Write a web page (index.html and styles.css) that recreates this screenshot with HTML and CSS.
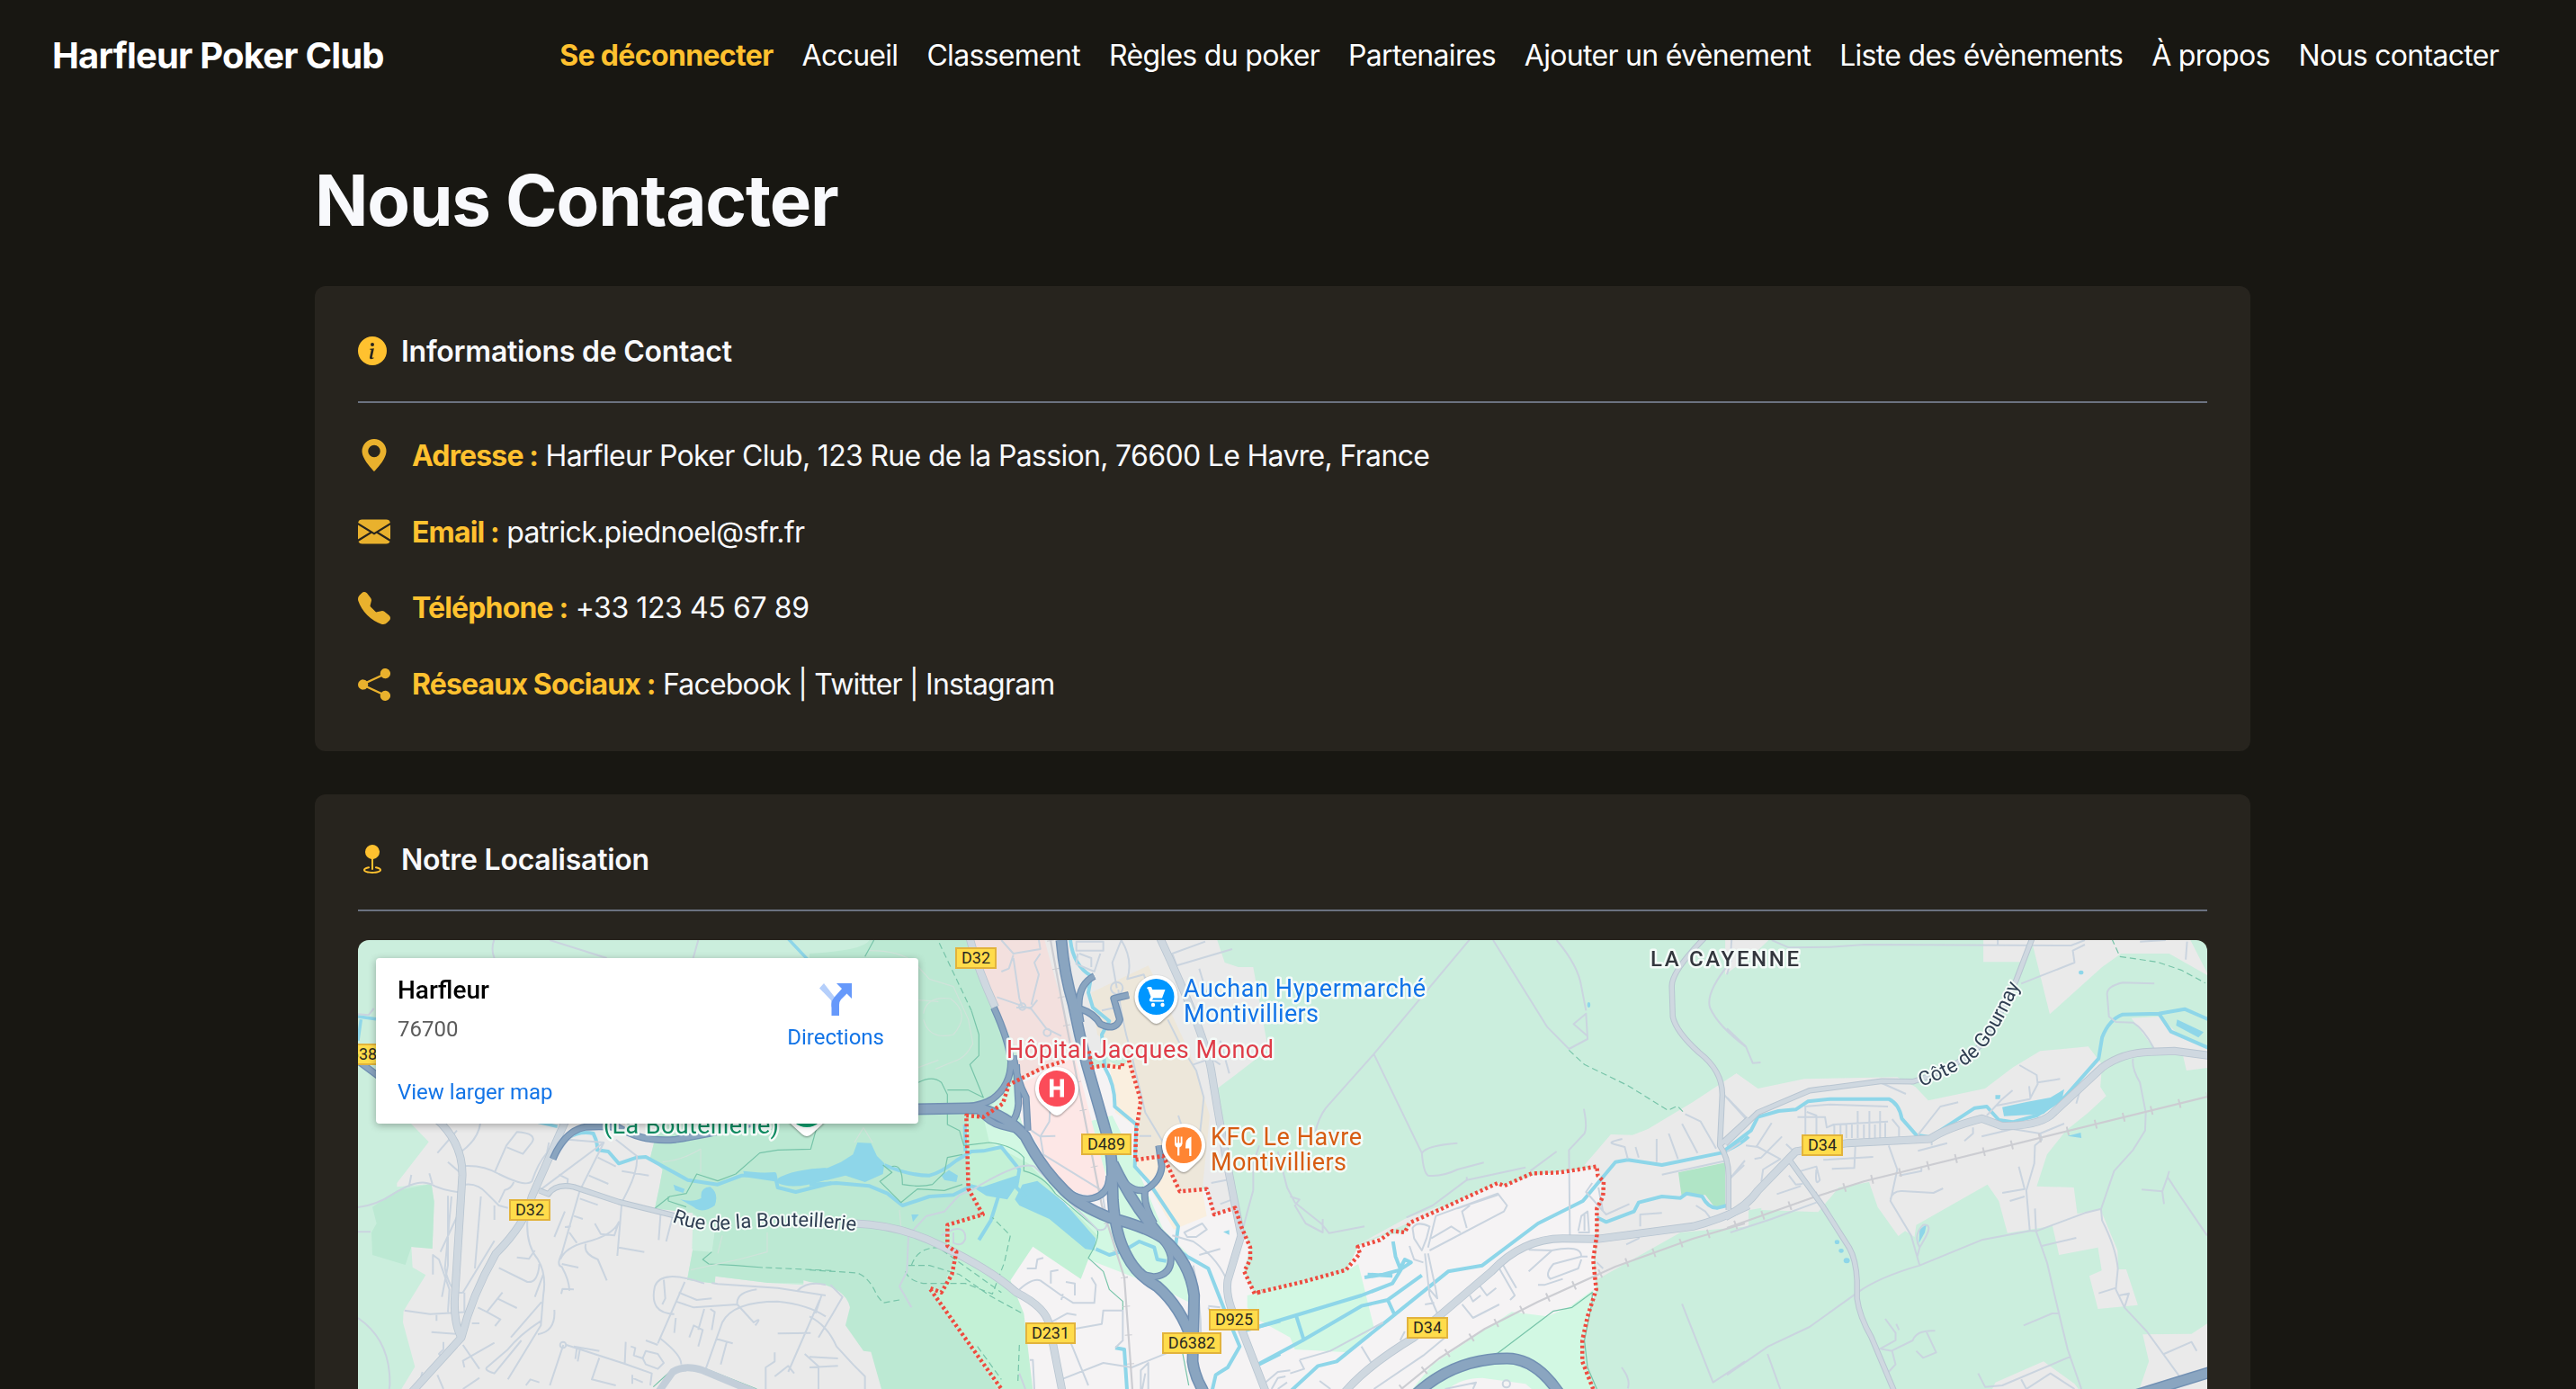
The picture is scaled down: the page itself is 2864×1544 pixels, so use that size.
FILE: index.html
```html
<!DOCTYPE html>
<html lang="fr">
<head>
<meta charset="utf-8">
<title>Nous Contacter - Harfleur Poker Club</title>
<link rel="stylesheet" href="styles.css">
</head>
<body>
<header class="navbar">
  <a class="brand">Harfleur Poker Club</a>
  <nav class="nav">
    <a class="logout">Se déconnecter</a>
    <a>Accueil</a>
    <a>Classement</a>
    <a>Règles du poker</a>
    <a>Partenaires</a>
    <a>Ajouter un évènement</a>
    <a>Liste des évènements</a>
    <a>À propos</a>
    <a>Nous contacter</a>
  </nav>
</header>
<main class="page">
  <h1>Nous Contacter</h1>
  <section class="card">
    <h2><svg class="icon" viewBox="0 0 16 16"><path d="M8 16A8 8 0 1 0 8 0a8 8 0 0 0 0 16m.93-9.412-1 4.705c-.07.34.029.533.304.533.194 0 .487-.07.686-.246l-.088.416c-.287.346-.92.598-1.465.598-.703 0-1.002-.422-.808-1.319l.738-3.468c.064-.293.006-.399-.287-.47l-.451-.081.082-.381 2.29-.287zM8 5.5a1 1 0 1 1 0-2 1 1 0 0 1 0 2"/></svg><span>Informations de Contact</span></h2>
    <ul class="contacts">
      <li><svg class="icon" viewBox="0 0 16 16"><path d="M8 16s6-5.686 6-10A6 6 0 0 0 2 6c0 4.314 6 10 6 10m0-7a3 3 0 1 1 0-6 3 3 0 0 1 0 6"/></svg><p><strong>Adresse :</strong> <span>Harfleur Poker Club, 123 Rue de la Passion, 76600 Le Havre, France</span></p></li>
      <li><svg class="icon" viewBox="0 0 16 16"><path d="M.05 3.555A2 2 0 0 1 2 2h12a2 2 0 0 1 1.95 1.555L8 8.414zM0 4.697v7.104l5.803-3.558zM6.761 8.83l-6.57 4.027A2 2 0 0 0 2 14h12a2 2 0 0 0 1.808-1.144l-6.57-4.027L8 9.586zm3.436-.586L16 11.801V4.697z"/></svg><p><strong>Email :</strong> <span>patrick.piednoel@sfr.fr</span></p></li>
      <li><svg class="icon" viewBox="0 0 16 16"><path fill-rule="evenodd" d="M1.885.511a1.745 1.745 0 0 1 2.61.163L6.29 2.98c.329.423.445.974.315 1.494l-.547 2.19a.68.68 0 0 0 .178.643l2.457 2.457a.68.68 0 0 0 .644.178l2.189-.547a1.75 1.75 0 0 1 1.494.315l2.306 1.794c.829.645.905 1.87.163 2.611l-1.034 1.034c-.74.74-1.846 1.065-2.877.702a18.6 18.6 0 0 1-7.01-4.42 18.6 18.6 0 0 1-4.42-7.009c-.362-1.03-.037-2.137.703-2.877z"/></svg><p><strong>Téléphone :</strong> <span class="digits">+33 123 45 67 89</span></p></li>
      <li><svg class="icon" viewBox="0 0 16 16"><path d="M11 2.5a2.5 2.5 0 1 1 .603 1.628l-6.718 3.12a2.5 2.5 0 0 1 0 1.504l6.718 3.12a2.5 2.5 0 1 1-.488.876l-6.718-3.12a2.5 2.5 0 1 1 0-3.256l6.718-3.12A2.5 2.5 0 0 1 11 2.5"/></svg><p><strong>Réseaux Sociaux :</strong> <span class="links">Facebook | Twitter | Instagram</span></p></li>
    </ul>
  </section>
  <section class="card">
    <h2><svg class="icon" viewBox="0 0 16 16"><path fill-rule="evenodd" d="M4 4a4 4 0 1 1 4.5 3.969V13.5a.5.5 0 0 1-1 0V7.97A4 4 0 0 1 4 3.999zm2.493 8.574a.5.5 0 0 1-.411.575c-.712.118-1.28.295-1.655.493a1.3 1.3 0 0 0-.37.265.3.3 0 0 0-.057.09V14l.002.008.016.033a.6.6 0 0 0 .145.15c.165.13.435.27.813.395.751.25 1.82.414 3.024.414s2.273-.163 3.024-.414c.378-.126.648-.265.813-.395a.6.6 0 0 0 .146-.15l.015-.033L12 14v-.004a.3.3 0 0 0-.057-.09 1.3 1.3 0 0 0-.37-.264c-.376-.198-.943-.375-1.655-.493a.5.5 0 1 1 .164-.986c.77.127 1.452.328 1.957.594C12.5 13 13 13.4 13 14c0 .426-.26.752-.544.977-.29.228-.68.413-1.116.558-.878.293-2.059.465-3.34.465s-2.462-.172-3.34-.465c-.436-.145-.826-.33-1.116-.558C3.26 14.752 3 14.426 3 14c0-.599.5-1 .961-1.243.505-.266 1.187-.467 1.957-.594a.5.5 0 0 1 .575.411"/></svg><span>Notre Localisation</span></h2>
    <div class="map">
      <svg class="tiles" viewBox="398 1045 2056 499">
        <defs>
          <path id="hw-main" d="M840 15Q850 130 880 230Q900 330 925 430L985 640Q1010 720 1010 800L1012 880Q1020 1000 1060 1070Q1090 1130 1160 1170Q1240 1240 1275 1350M300 580L560 575Q660 600 720 670Q770 770 850 850Q900 900 1000 940Q1120 970 1180 1010Q1270 1090 1283 1200L1278 1420Q1285 1470 1310 1512L1330 1560M1012 760Q1080 900 1160 990L1200 1030"/>
          <path id="hw-ramp" d="M615 240Q665 350 672 420Q672 500 610 545Q580 565 520 572M680 400Q690 480 722 540L728 650M690 430L697 560Q695 600 670 630M560 580Q600 625 640 635L700 650M1000 800Q1000 870 930 878Q900 880 860 855M1025 790Q1070 860 1120 848Q1170 820 1175 770L1165 700M1120 848Q1110 890 1150 960M1120 975Q1190 1010 1205 1070Q1210 1130 1150 1138L1110 1130M905 290Q880 170 950 135M905 245Q950 260 970 295Q1020 320 1035 280L1015 210L1065 198"/>
          <path id="hw-west" d="M650 745Q690 650 760 638Q820 635 870 640Q950 690 1060 680Q1250 650 1400 600M-10 410L70 470"/>
          <path id="hw-south" d="M490 1545Q620 1410 800 1410Q900 1410 980 1545"/>
          <path id="hw-east" d="M1180 1535L1420 1450"/>
          <path id="rd-west" d="M150 1555L345 1340Q380 1200 460 1060Q560 960 580 870L700 600M260 610Q350 690 348 800L322 1220Q322 1300 345 1340"/>
          <path id="rd-west2" d="M605 850L635 862Q660 825 720 838L870 888L1060 935"/>
          <path id="rd-mid" d="M150 960Q300 965 430 1030Q600 1110 690 1190Q790 1240 800 1300L845 1530M535 10Q560 110 620 240M1170 10Q1320 330 1340 450Q1380 700 1420 900L1440 1000L1395 1150Q1385 1220 1440 1310L1525 1530"/>
          <path id="rd-d34" d="M270 1530Q340 1440 500 1340L750 1120Q850 1010 980 1010L1090 1012L1400 970Q1480 950 1580 900"/>
          <path id="rd-cayenne" d="M1440 5Q1330 120 1332 170L1335 270Q1345 320 1420 390Q1495 450 1495 530L1487 700Q1515 740 1515 800V915M1485 700L1580 610"/>
          <path id="rd-east" d="M-5 938Q60 900 90 850L200 720L350 692L590 678Q640 640 740 610L800 635Q900 635 940 600L1090 440Q1150 390 1230 388L1300 385L1400 400"/>
          <path id="rd-gournay" d="M-5 695L90 590L240 517L450 485L540 487Q680 440 760 340L840 150L890 0M180 745L280 905L355 1040Q375 1080 378 1150L378 1210Q385 1270 420 1340L490 1530"/>
        </defs>

        <rect class="field" x="398" y="1045" width="2056" height="499"/>

        <!-- Land use -->
        <g transform="translate(398 1040) scale(.33333)">
          <path class="urban" d="M160 610L236 688L130 825V838L245 828L254 888L248 1044L178 1038L182 1106L226 1132L152 1252L150 1290L190 1438L140 1520V1560H1570V1170L1368 1158L1192 1136L1190 1160L1098 1148L1116 1050V925L990 910L1005 840L1016 780L975 740L990 680V600Z"/>
          <path class="park" d="M48 905L130 850L245 828L254 888L248 1044L178 1038L158 1098L48 1065L45 990L62 960ZM990 680V600H1580V1160L1368 1158L1192 1136L1190 1160L1098 1148L1116 1050L1180 1055L1190 980L1116 925L990 910L1005 840L1016 780L975 740Z"/>
          <path class="field" d="M1116 985L1190 985L1180 1055L1114 1045Z"/>
        </g>
        <g transform="translate(900 1040) scale(.33333)">
          <path class="park" d="M215 0H540L620 240L680 420L690 500L560 600L540 850L590 930L470 965V1035L490 1060L440 1190L400 1175L640 1530H0V60Q180 50 200 15Z"/>
          <path class="urban" d="M0 1155Q120 1170 135 1240L120 1300L180 1385L205 1388L245 1530H-20V1150ZM780 0H1355L1385 90L1430 105L1480 105L1530 380L1420 465L1360 510L1395 780L1420 908L1350 930L1325 845L1180 735L1060 400L840 415Z"/>
          <path class="hospital" d="M540 0H780L890 400L700 480L690 380L620 240Z"/>
          <path class="mall" d="M940 190L1130 100L1170 180L1240 330L1280 420L1335 600L1310 850L1235 853L1180 735L1088 745L1105 550L1065 415L960 330Z"/>
          <path class="town" d="M525 600L580 605L660 500L850 415L935 400L940 440L1040 440L1065 415L1105 550L1088 745L1180 735L1235 853L1325 845L1350 930L1420 908L1470 1040L1450 1120L1485 1195L1570 1170V1540H650L400 1175L440 1190L490 1060L460 1035V965L580 930L530 850Z"/>
          <path class="town-park" d="M525 600L580 605L660 500L690 560L740 740L850 900L1000 960L1030 1060L930 1080L905 1145L745 1037L670 1150L715 1260L748 1540H650L400 1175L440 1190L490 1060L460 1035V965L580 930L530 850Z"/>
          <path class="town-green" d="M660 500L695 490V600L740 680L730 760L600 690L580 605ZM730 720L850 860L1000 950L990 800L930 620L1010 600L1060 700L1180 980L1260 1060L1270 1225L1160 1170L930 1080L960 1000L730 760ZM1460 1200L1570 1175V1300L1500 1290L1460 1240Z"/>
          <path class="town-hospital" d="M690 500L850 425L885 400L985 790Q990 870 930 865Q860 860 800 770L735 650Z"/>
          <path class="town-mall" d="M1000 420L1040 440L1065 415L1105 550L1088 745L1180 735L1235 853L1310 845L1325 935L1215 980L1140 850L1090 760L1080 630L1020 590Z"/>
        </g>
        <g transform="translate(1400 1040) scale(.34439 .33333)">
          <path class="town" d="M-5 1190L280 1120L320 1035L400 1000L470 990L490 955L770 825L790 835L880 800L1090 770L1110 830L1090 920L1080 1100L1088 1180L1045 1340V1430L1090 1540H-5Z"/>
          <path class="town-green" d="M-5 1190L280 1120L320 1095L370 1305L290 1390L115 1380L100 1340L-5 1280ZM480 1530L560 1430L815 1255L930 1270L1000 1240L1080 1180L1045 1340V1430L1090 1540Z"/>
          <path class="town" d="M590 1530Q640 1475 720 1475L860 1495L900 1530Z"/>
          <path class="urban" d="M1090 770L1050 765L1135 663L1205 665L1255 645L1400 555L1540 460L1580 490V970L1360 990L1085 1150L1092 920L1112 830ZM320 1030L470 945L600 895L490 955ZM1420 0H1580V60L1530 20Z"/>
          <path class="grove" d="M1353 790L1505 757L1512 905L1470 905L1440 865L1363 865Z"/>
        </g>
        <g transform="translate(1920 1040) scale(.38265 .33333)">
          <path class="urban" d="M-5 485L28 460L90 510L225 478L495 472L548 505L585 550L750 510L830 440L910 385L1050 370L1090 430L1085 505L1102 535L1050 590L985 650L930 730L900 836L1008 840L1018 928L1085 912L1135 1050L1137 1113L1160 1113L1194 1232L1078 1245L1053 1135L1089 1117L1078 1040L965 1065L946 968L815 992L790 885L757 830L550 965L545 1005L518 985L498 1002L438 905L413 822L325 840L265 922L100 915V908L-5 930ZM-5 0H135L80 60L-5 130ZM745 0V88H855L885 15L938 262L1090 105L1145 60H1285L1400 135L1340 0ZM1175 275L1260 270L1320 340L1400 375V440L1335 450L1325 400L1240 375ZM1208 1330L1350 1328L1400 1290V1540H1190L1226 1420ZM780 1490L920 1420L1010 1495L1040 1540H760Z"/>
        </g>

        <!-- Water -->
        <g class="water" transform="translate(398 1040) scale(.33333)">
          <path class="w3" d="M1425 0L1500 80M0 270L60 278M10 280L0 350M590 620L665 637"/>
          <path class="w4" d="M700 675Q740 650 785 660Q800 690 798 715L835 720L870 760L930 740L960 738L1100 815L1200 830L1280 800L1390 795L1400 840L1460 855L1580 825"/>
          <path class="lake" d="M1075 880Q1120 890 1145 875Q1140 840 1175 838Q1205 860 1190 900Q1150 930 1120 905ZM1285 785L1390 795V820L1290 805ZM1400 810Q1450 780 1560 775V815Q1450 850 1400 825ZM1052 830L1090 845L1085 858L1058 850Z"/>
        </g>
        <g class="water" transform="translate(900 1040) scale(.33333)">
          <path class="lake" d="M0 780L60 775L105 755L145 730L160 690L205 692L225 735L250 760L245 795L185 822L120 800L60 815L0 820ZM440 800L465 782L495 800L490 822L450 815ZM555 845L690 800L700 820L660 880L590 868ZM685 880L710 830L760 818L850 890L955 1010L950 1050L920 1045L800 945L700 900ZM340 930L365 930L345 955Z"/>
          <path class="w4" d="M250 765Q330 800 400 800Q440 790 490 750L540 720L580 718L640 705L700 780L690 840L720 870M630 870L605 950L565 1015M0 830L90 825L200 835L260 860L310 900L400 870L480 865L540 835L600 850M870 15Q880 100 940 135L930 190L945 240L1000 285L975 330L985 440Q1020 500 1018 570L1090 630L1085 770L1130 820L1230 970L1220 1040M955 1045L1000 1065L1050 1050L1100 1020L1150 1040L1160 1080L1190 1085M1230 1050L1260 1070L1330 1110L1385 1250L1435 1370L1395 1440L1355 1465L1340 1530M1440 1320L1570 1285M1490 1435L1570 1395M1020 1375L1050 1380L1060 1530M518 630L520 720"/>
          <path class="lake" d="M1380 988L1400 982V998Z"/>
        </g>
        <g class="water" transform="translate(1400 1040) scale(.34439 .33333)">
          <path class="w4" d="M-5 1305L330 1200L430 1160L460 1110L490 1090L470 1080L455 1110L440 1070L432 1020M455 1115L400 1130L340 1140M350 1130L430 1135M-5 1430L140 1350L330 1235L415 1215L525 1133M415 1215L435 1260M120 1270L143 1345M90 1530L190 1435L250 1420L430 1270L610 1120L720 1100L900 960L1045 885L1150 755L1190 748L1300 765L1490 725Q1550 700 1580 670M1090 940L1120 955L1210 920L1225 890L1300 870L1360 875L1380 860L1430 870Q1450 910 1480 908L1510 900"/>
          <ellipse class="lake" cx="1064" cy="231" rx="5" ry="9"/>
        </g>
        <g class="water" transform="translate(1920 1040) scale(.38265 .33333)">
          <path class="w4" d="M-5 715L70 650L90 605L150 585L200 580L235 553L300 545L470 545Q500 560 508 610L550 665L590 672L640 635L720 575L755 570L790 615L830 622L900 600L980 540L1080 410L1090 340Q1110 280 1150 263L1255 260L1330 245L1400 280M1255 260L1290 320L1400 375"/>
          <path class="lake" d="M800 572L870 555L940 540L980 512L975 540L920 595L805 602ZM1308 280L1385 322L1370 340L1305 300ZM990 668L1028 657L1030 675ZM780 532L795 532L793 545L780 545ZM558 1025L560 980L580 962L575 990Z"/>
          <circle class="lake" cx="1029" cy="123" r="7"/><circle class="lake" cx="320" cy="1022" r="7"/><circle class="lake" cx="332" cy="1051" r="7"/><circle class="lake" cx="348" cy="1084" r="9"/>
        </g>

        <!-- Trails -->
        <g transform="translate(398 1040) scale(.33333)">
          <path class="trail" d="M990 910L1040 870L1095 860L1130 795L1200 818L1260 795L1340 725L1400 715L1510 712L1530 640M1095 905L1035 885V870M1180 1055L1150 1080L1170 1095L1260 1100L1350 1107M985 1505L1040 1455M1160 1445L1330 1512"/>
          <path class="trail dashed" d="M1360 1107L1580 1117"/>
        </g>
        <g transform="translate(900 1040) scale(.33333)">
          <path class="trail" d="M363 490Q410 465 440 490L460 530V630L500 650L515 700L600 690Q680 700 715 740V785Q780 800 820 860L960 980Q970 1010 930 1075L980 1120L1000 1180L1045 1220V1250M460 515L530 515L580 540L535 430L565 400V330L540 250M245 765L275 790L235 820L305 890L360 845L450 850L510 830M275 770Q310 760 310 830Q370 840 410 830L450 790L460 740L510 730M215 15L185 70M1245 1395L1265 1500"/>
          <path class="trail dashed" d="M433 25L540 250M0 1115L160 1125Q200 1140 225 1200L245 1225L300 1215M330 1100L400 1100L500 1130L600 1200L710 1260M340 1100Q360 1040 430 1040L640 1190M320 1120Q330 1150 380 1160L520 1160L610 1195L650 1090L670 1000L610 940M700 1365L695 1490M560 1370L640 1480"/>
        </g>
        <g transform="translate(1400 1040) scale(.34439 .33333)">
          <path class="trail" d="M760 1400L950 1252L1010 1240L1075 1190V1220L1050 1350L1060 1440L1090 1512"/>
          <path class="trail dashed" d="M1000 382L1050 430L1190 500L1320 583L1350 568L1375 595"/>
        </g>
        <g transform="translate(1920 1040) scale(.38265 .33333)">
          <path class="trail dashed" d="M1118 10L1142 70L1250 88L1320 115L1390 158"/>
        </g>

        <!-- Local streets -->
        <g class="street" transform="translate(398 1040) scale(.33333)">
          <path d="M460 0Q440 40 455 75M640 15L830 75M1135 15L1118 75M0 262L35 265L53 243M0 906Q60 900 120 860Q200 810 240 828Q280 850 340 856M170 838L178 798M238 793L248 828M300 755L340 790M0 988H42M0 1275Q110 1350 106 1500L104 1512M265 725L330 650M408 627Q400 680 345 720M355 768Q420 765 470 795Q560 840 580 820Q600 760 630 725L637 690M457 787L495 700L530 655Q600 660 580 690L550 728L497 706M358 830Q400 825 430 860L470 900L500 908M520 822Q510 845 490 848L470 890M455 900V948M658 742L700 680L720 665M605 850L820 690L700 680M820 690L740 850L680 1060Q660 1100 680 1105Q705 1150 705 1185M678 1195L682 1178L720 1180M860 680L930 735Q935 780 900 850L880 890L865 1068M800 740L860 770M880 785L970 800M770 800L835 828M670 797L700 812L698 832M740 877L800 898M690 920L655 1005M690 972L710 970M720 935L750 945M790 960L810 995L855 1000L870 955Q850 1000 760 1022Q690 1040 675 1080M705 990L730 1025M760 1028Q750 1060 800 1080L830 1150M870 1040L955 1055M680 1095L735 1107M1010 920L1003 1015M1050 935L1028 1020M565 950Q560 1030 600 1080Q630 1130 618 1200L610 1300L500 1480M530 1073L570 1078L590 1050M470 1108L565 1155Q600 1160 605 1095M618 1130L590 1205M612 1222L510 1340M655 1248Q660 1320 600 1330M610 1285Q540 1330 500 1380L430 1440Q420 1450 455 1460L545 1350M300 868V1100L280 1205M312 870L290 1110Q310 1200 350 1190L455 1018M335 927L275 1055M410 870L390 1110M250 1130V1065L270 1080L305 1180L300 1255M355 1190V1255M155 1250L240 1262L370 1255M262 1262V1285M245 1322L325 1328M400 1240L430 1255L475 1280L457 1302M430 1255L482 1190M465 1210L530 1242M380 1293H405M285 1355V1380L270 1395L290 1415M350 1365L405 1445M355 1440L350 1418L455 1358M405 1475L350 1512M215 1455L205 1490M265 1465L285 1512M1060 1275L1055 1325M1020 1148L1025 1210L1015 1230M1155 1160Q1010 1110 990 1170Q970 1260 1055 1262M1090 1155L1000 1360M1070 1190L1130 1215L1180 1210M1060 1220L1120 1240L1265 1230M1180 1158L1200 1162L1400 1175L1560 1200M1265 1230Q1260 1190 1330 1180M1265 1230L1320 1290Q1350 1270 1325 1300M1160 1445L1215 1290Q1250 1220 1400 1220Q1500 1230 1560 1270M1465 1185Q1500 1150 1560 1165M1540 1215L1435 1455M1155 1245L1135 1315M1175 1245L1190 1255L1180 1315M1105 1340L1120 1300L1150 1315L1135 1370M1195 1345L1250 1360M1230 1355L1210 1430M1400 1327L1510 1325M960 1350L1000 1365M1010 1345Q1080 1400 1078 1430M685 1365L640 1500M695 1365L890 1428L980 1460L975 1500M720 1370L805 1385M730 1375L725 1412M740 1380L733 1420M805 1408L780 1480L860 1500M893 1355L890 1425M910 1370L925 1375L920 1400L950 1410L960 1385L1000 1395L1020 1425L1000 1445L960 1430L950 1410M915 1465V1495M915 1475L950 1490M560 1500L575 1480L605 1490M1390 1390V1420L1360 1440V1512M1390 1470L1435 1435L1455 1460M1490 1395L1540 1440"/>
          <path class="avenue" d="M1000 1525L1050 1455Q1090 1430 1150 1450L1330 1525"/>
          <circle cx="684" cy="1365" r="10"/>
        </g>
        <g class="street faint" transform="translate(398 1040) scale(.33333)">
          <path d="M1016 755Q1080 750 1143 712V790M1200 1060L1215 1000M1365 990V1055L1270 1080L1110 1115"/>
        </g>
        <g class="street faint" transform="translate(900 1040) scale(.33333)">
          <path d="M200 50Q300 50 350 90L400 145L480 170L530 280L545 360Q520 410 480 420L420 445M380 260Q390 200 470 210Q540 260 480 330Q400 350 380 280M363 215L430 220M363 440L430 415M180 640L150 690M180 640L210 690M300 915L305 970"/>
        </g>
        <g class="street" transform="translate(900 1040) scale(.33333)">
          <path d="M640 15L680 60L770 45L765 15M680 65L665 110L640 120M680 75L700 210L710 237M625 205L740 245L790 310L840 335M690 240L740 240L760 215M740 230L765 130L750 90L770 60M540 850Q700 750 750 770L830 850L960 980Q1000 990 990 940L975 850L780 730L770 670L800 620L805 540M740 650L770 670L820 668M340 1240L300 1170L325 1120L330 1000L390 935L450 920L500 865L560 840M440 1000L480 980Q520 970 520 1010Q510 1040 480 1025V990M890 20H980V50H890ZM895 60L890 95L950 120L970 60M900 60L940 75V105M1040 15L1010 90L1025 175M1040 15Q1080 80 1060 145L1115 130L1130 170M1030 180Q1040 280 1070 380L1120 590L1180 690M975 250L1020 240M1225 100L1410 45M1225 100L1210 60L1320 20M1300 110L1330 210M1195 280L1240 370L1290 450L1315 540L1310 590L1300 680M1280 430L1340 410L1370 430M1370 350L1400 460M1230 600L1240 630M1100 668H1140M1480 850Q1460 920 1440 1000M1480 850L1480 760L1500 700M1210 1000L1280 1020Q1370 1080 1400 1170M1340 825L1390 815M1370 895L1410 880M1250 990L1310 960L1325 980L1290 1005H1260ZM1300 1065L1370 1045M1280 1100Q1310 1250 1305 1370M725 1110H755L760 1080L780 1075M805 1160V1120L830 1115M690 1190Q740 1140 770 1150L840 1200L880 1225H950L955 1165L940 1140M885 1200V1160L855 1155M840 1215L845 1195M805 1290L860 1260L890 1265M820 1290L840 1310L890 1310L975 1295L980 1250H1045V1350L1020 1375M840 1480L980 1425L1075 1440L1210 1385M860 1330L930 1500M735 1415H745L750 1512M700 1460L720 1512M1105 1512V1450L1130 1425V1512M1120 1460L1110 1512M1330 1235L1370 1240M1330 1240L1350 1285M0 1270Q60 1300 90 1370L145 1430L185 1470V1512M40 1200L20 1260M75 1265L110 1205L70 1165M30 1340L75 1265M0 1405L95 1410M0 1440L95 1435M30 1440V1512"/>
          <circle cx="710" cy="237" r="11"/><circle cx="793" cy="323" r="12"/><circle cx="1025" cy="175" r="20"/>
        </g>
        <g class="street" transform="translate(1400 1040) scale(.34439 .33333)">
          <path d="M690 0L370 395L215 575Q190 610 180 660M370 395L525 725Q530 790 545 800Q590 805 640 780L725 757M525 725Q540 700 640 692M755 15L930 305L1000 378L1060 345L1055 260L1015 295L1060 335M960 15Q1030 100 1040 170L1055 250M1048 578Q1060 640 1050 660L1000 715L1003 1000M475 940L560 900L670 815L860 773M670 805V815M875 785L960 720M60 720L90 840L115 890L200 960L225 992L340 970M100 870L130 880L115 900L150 960L205 990L205 945M1525 15L1520 90Q1440 190 1455 240Q1480 300 1570 370M1500 530L1570 610M1375 595L1425 620L1475 710M1365 628L1415 725M1322 660L1352 745M1283 678V755M1215 705L1225 740M1172 678Q1120 690 1145 695L1180 705L1190 745M1300 797L1400 775L1510 750M1520 810L1568 750M495 975Q510 950 550 970L540 1010L525 1050L500 1010ZM545 1040L570 935L770 860L800 900L790 920L550 1050M680 900L655 920L670 975M555 1010L620 970L650 990M640 910L770 865M485 1035L500 1080L530 1090M535 1060L550 1200L575 1260M545 1060L570 1180L575 1210L550 1180M870 1048L945 1050Q1040 1030 1040 1070H1060M945 1050L870 1120M1040 1080L1030 1110L940 1145Q920 1130 950 1095L1040 1070M900 1165H920L980 1145M785 1095L830 1175M775 1110L825 1200L810 1215M710 1165L735 1200L765 1175M680 1200L690 1220L715 1200M655 1230L690 1275L775 1230M1030 985L1040 935L1060 920L1065 990H1030M1050 930V985M1075 825L1055 855L1120 930L1195 895M1095 840L1110 920M1090 1090L1110 1110M1185 1030L1225 1010V995M1230 970V930L1300 925M1410 900L1440 920L1455 940M535 1230L565 1225M130 1415L230 1385L400 1290M130 1415L145 1445L100 1460M330 1370L365 1430M370 1512L530 1400L600 1340M455 1350L470 1320M20 1490L60 1455L100 1450M40 1512L60 1475L85 1470M60 1512L90 1490M195 1485L230 1512M1365 1228L1465 1490L1568 1420M1170 1440Q1200 1480 1190 1510M600 1512L700 1490L690 1512"/>
          <circle cx="798" cy="1495" r="12"/>
        </g>
        <g class="street" transform="translate(1920 1040) scale(.38265 .33333)">
          <path d="M130 15L180 40L300 38L400 30L1000 33L1040 15M18 60L0 130M855 160L1010 90L1005 50L1040 30M1337 20L1333 80M1200 20L1275 15M787 15V30M1242 160L1150 157Q1100 170 1105 200L1110 270L1130 288L1180 290Q1210 310 1240 375M1180 410Q1175 440 1200 490L1217 590L1215 650L1180 715L1125 785L1087 912L1090 950Q1130 1040 1136 1110L1130 1180L1155 1240L1220 1320L1320 1478M0 310L55 370L75 425L98 423M0 540L55 605M850 432L900 465L903 495L880 545L780 568M903 490L968 478M878 502L882 545M755 600L800 545L830 516M1025 520L1015 560M555 665L620 570L672 556M450 492L520 528M225 570L300 563L468 570M228 570V665M232 588L260 600V665M205 605H285L290 640L310 630L468 620M312 630V675M330 630V675M347 630V675M363 630V675M380 585V675M398 630V675M414 585V675M430 630V675M445 585V675M460 625V675M480 612L500 640V670M470 700L495 780L475 885L535 1000L560 1100M475 880Q480 850 510 852L600 858L628 843M500 800L565 785V770M555 718L640 692M595 700V690M740 670L830 645M715 640L715 660L690 685M830 645L910 660L980 627M910 660L915 680L895 700L893 760L870 850L880 985M848 770L865 845L800 858M865 870L822 885M895 910L898 985L930 1090Q960 1240 990 1380L1030 1512M0 1465L120 1370L240 1305L380 1190Q440 1140 560 1100L740 1015L880 985L900 985L1040 925L1085 912M915 1035L1015 1008M862 1300L945 1260H965M730 1460L750 1505L800 1500L1000 1403M855 1480L870 1512L940 1460L1010 1512M118 1395L155 1512M460 1278L490 1325V1350L445 1378L480 1385L490 1430L470 1455M492 1295L500 1315M478 1385L540 1350Q550 1315 605 1318M580 1322L608 1390L570 1408L550 1385M1080 1193L1130 1175M1140 1200L1168 1193L1155 1240M1270 1395L1350 1355L1365 1385M1205 847L1265 853L1280 805L1285 785M1280 805Q1295 830 1300 840L1395 1000M1265 853L1270 895M10 990L130 945L260 890M80 745L100 740L160 670M55 700L90 705L155 745L105 780L100 820M85 705L130 625M0 720L40 690M0 820L50 765M215 785L260 770L270 815Q255 840 260 780M180 800L200 830L220 828M145 862L215 835M280 748L425 738M305 778L370 775L373 705M172 695L190 715M553 1070L560 1040Q540 1000 570 965Q600 960 575 1010L560 1040"/>
        </g>

        <!-- Railway -->
        <path class="rail" d="M1558 1544L1600 1510L1651 1477L1710 1447L1796 1408L1882 1377L1940 1360M1920 1365L2016 1331L2073 1313L2454 1219M1168 1045L1180 1110L1225 1340L1250 1420L1259 1544"/>
        <path class="rail-ties" d="M1558 1544L1600 1510L1651 1477L1710 1447L1796 1408L1882 1377L1920 1365L2016 1331L2073 1313L2454 1219"/>
        <path class="rail-ties thin" d="M1168 1045L1180 1110L1225 1340L1250 1420L1259 1544"/>

        <!-- Departmental roads and motorways -->
        <g class="road-casing">
          <use href="#rd-west" transform="translate(398 1040) scale(.33333)"/><use href="#rd-mid" transform="translate(900 1040) scale(.33333)"/><use href="#rd-d34" transform="translate(1400 1040) scale(.34439 .33333)"/><use href="#rd-east" transform="translate(1920 1040) scale(.38265 .33333)"/>
        </g>
        <g class="road-casing slim">
          <use href="#rd-west2" transform="translate(398 1040) scale(.33333)"/><use href="#rd-cayenne" transform="translate(1400 1040) scale(.34439 .33333)"/><use href="#rd-gournay" transform="translate(1920 1040) scale(.38265 .33333)"/>
        </g>
        <g class="road">
          <use href="#rd-west" transform="translate(398 1040) scale(.33333)"/><use href="#rd-mid" transform="translate(900 1040) scale(.33333)"/><use href="#rd-d34" transform="translate(1400 1040) scale(.34439 .33333)"/><use href="#rd-east" transform="translate(1920 1040) scale(.38265 .33333)"/>
        </g>
        <g class="road slim">
          <use href="#rd-west2" transform="translate(398 1040) scale(.33333)"/><use href="#rd-cayenne" transform="translate(1400 1040) scale(.34439 .33333)"/><use href="#rd-gournay" transform="translate(1920 1040) scale(.38265 .33333)"/>
        </g>
        <g class="hw-casing">
          <use class="ramp" href="#hw-ramp" transform="translate(900 1040) scale(.33333)"/><use class="ramp" href="#hw-west" transform="translate(398 1040) scale(.33333)"/>
          <use href="#hw-main" transform="translate(900 1040) scale(.33333)"/><use href="#hw-south" transform="translate(1400 1040) scale(.34439 .33333)"/><use href="#hw-east" transform="translate(1920 1040) scale(.38265 .33333)"/>
        </g>
        <g class="hw">
          <use class="ramp" href="#hw-ramp" transform="translate(900 1040) scale(.33333)"/><use class="ramp" href="#hw-west" transform="translate(398 1040) scale(.33333)"/>
          <use href="#hw-main" transform="translate(900 1040) scale(.33333)"/><use href="#hw-south" transform="translate(1400 1040) scale(.34439 .33333)"/><use href="#hw-east" transform="translate(1920 1040) scale(.38265 .33333)"/>
        </g>

        <!-- Commune boundary -->
        <path class="boundary" transform="translate(900 1040) scale(.33333)" d="M850 418L780 440L665 497L645 560L580 605L523 600L530 845L578 930L460 965V1035L490 1055L475 1130L440 1190L400 1175L640 1512L660 1540M932 385L942 440L985 433L1042 440L1045 420M1065 415L1105 550L1090 650L1086 748L1180 735L1235 853L1325 845L1350 930L1420 908L1440 970L1470 1040V1080L1450 1120L1485 1195L1510 1185"/>
        <path class="boundary" transform="translate(1400 1040) scale(.34439 .33333)" d="M-5 1190L140 1155L280 1115L325 1060L318 1038L390 1015L430 985L470 990L485 958L580 915L770 825L790 835L880 793L970 790L1090 770L1093 800L1112 820L1110 870L1090 910L1090 1000L1078 1080L1088 1180L1060 1270L1043 1350V1420L1078 1512"/>

        <!-- Road shields -->
        <g class="shield">
          <rect x="392" y="1161" width="40" height="22"/><rect x="567" y="1334" width="44" height="22"/><rect x="1063" y="1054" width="44" height="22"/><rect x="1203" y="1261" width="54" height="22"/><rect x="1141" y="1471" width="54" height="22"/><rect x="1345" y="1456" width="54" height="22"/><rect x="1293" y="1482" width="64" height="22"/><rect x="1565" y="1465" width="44" height="22"/><rect x="2004" y="1262" width="44" height="22"/>
          <text x="404" y="1178">638</text><text x="589" y="1351">D32</text><text x="1085" y="1071">D32</text><text x="1230" y="1278">D489</text><text x="1168" y="1488">D231</text><text x="1372" y="1473">D925</text><text x="1325" y="1499">D6382</text><text x="1587" y="1482">D34</text><text x="2026" y="1279">D34</text>
        </g>

        <!-- Pins -->
        <g class="pin">
          <path transform="translate(1285.5 1108)" d="M0-24A24 24 0 0 1 17 17L5 28Q0 32-5 28L-17 17A24 24 0 0 1 0-24Z"/>
          <path transform="translate(1175 1210)" d="M0-24A24 24 0 0 1 17 17L5 28Q0 32-5 28L-17 17A24 24 0 0 1 0-24Z"/>
          <path transform="translate(1316 1273)" d="M0-24A24 24 0 0 1 17 17L5 28Q0 32-5 28L-17 17A24 24 0 0 1 0-24Z"/>
          <path transform="translate(897 1233)" d="M0-24A24 24 0 0 1 17 17L5 28Q0 32-5 28L-17 17A24 24 0 0 1 0-24Z"/>
        </g>
        <circle cx="1285.5" cy="1108" r="20" fill="#0096ff"/>
        <circle cx="1175" cy="1210" r="20" fill="#fb4c59"/>
        <circle cx="1316" cy="1273" r="20" fill="#ff8533"/>
        <circle cx="897" cy="1233" r="20" fill="#0e9f6e"/>
        <path fill="#fff" d="M1276 1097h4l1.300 3h14.200l-3.500 9.500h-9.800l-1.200 2h13v2h-14.500q-2.500-.8-1.200-3.200l1.200-2.200-3.400-9h-1.100z"/>
        <circle cx="1282" cy="1117" r="2.200" fill="#fff"/><circle cx="1292.500" cy="1117" r="2.200" fill="#fff"/>
        <path fill="#fff" d="M1167 1199.500h4.500v8h7v-8h4.500v20h-4.500v-8h-7v8h-4.500z"/>
        <path fill="#fff" d="M1306 1263.500h1.800v7h1.600v-7h1.700v7h1.600v-7h1.800v8q-.5 3-3.200 4v9h-2.200v-9q-3-1-3.100-4zM1324.500 1263.500v21.500h-2.300v-8.500h-4.200q-.5-11.500 6.500-13z"/>

        <!-- Place names -->
        <defs>
          <path id="rue" d="M747 1358Q772 1368 800 1367.500Q830 1364 880 1363Q920 1363 970 1371"/>
          <path id="cote" d="M2136 1208Q2185 1190 2204 1168Q2226 1142 2255 1075"/>
        </defs>
        <g class="place">
          <text class="blue" x="1316" y="1108" textLength="269">Auchan Hypermarché</text>
          <text class="blue" x="1316" y="1136" textLength="150">Montivilliers</text>
          <text class="red" x="1119" y="1176" textLength="297">Hôpital Jacques Monod</text>
          <text class="orange" x="1346" y="1273" textLength="168">KFC Le Havre</text>
          <text class="orange" x="1346" y="1301" textLength="151">Montivilliers</text>
          <text class="green" x="671" y="1260" textLength="195">(La Bouteillerie)</text>
          <text class="locality" x="1835" y="1074" textLength="165">LA CAYENNE</text>
          <text class="way"><textPath href="#rue" textLength="206">Rue de la Bouteillerie</textPath></text>
          <text class="way"><textPath href="#cote" textLength="164">Côte de Gournay</textPath></text>
        </g>
      </svg>
      <div class="place-card">
        <div class="place-info">
          <strong>Harfleur</strong>
          <span>76700</span>
          <a>View larger map</a>
        </div>
        <div class="directions">
          <svg viewBox="0 0 36 36"><path fill="#b5cffb" d="M5 0L0 5.500L13 19V27L19 18Z"/><path fill="#6699fb" d="M19 0H36V17L30.500 11.500L24 18Q22 20.500 22 24V36H13.500V23Q14 18 17 15L25 6Z"/></svg>
          <a>Directions</a>
        </div>
      </div>
    </div>
  </section>
</main>
</body>
</html>
```
FILE: styles.css
```css
* {
  box-sizing: border-box;
}

html {
  overflow: hidden;
}

body {
  display: flex;
  flex-direction: column;
  margin: 0;
  height: 100vh;
  overflow: hidden;
  background: #181712;
  color: #f8f9fc;
  font-family: Inter, "Liberation Sans", sans-serif;
  font-size: 32px;
}

.navbar {
  display: flex;
  flex: none;
  justify-content: space-between;
  align-items: center;
  height: 122px;
  padding: 0 86px 0 58px;
  color: #fff;
  white-space: nowrap;
}

.brand {
  font-size: 40px;
  font-weight: 700;
  letter-spacing: -0.8px;
}

.nav {
  display: flex;
  gap: 32px;
  letter-spacing: -0.7px;
}

.logout {
  color: #ffc12f;
  font-weight: 700;
  letter-spacing: -0.65px;
}

.page {
  display: flex;
  flex: 1;
  flex-direction: column;
  width: 2152px;
  min-height: 0;
  margin-left: 350px;
}

h1 {
  margin: 0 0 48px;
  padding-top: 54px;
  font-size: 78px;
  font-weight: 700;
  line-height: 94px;
  letter-spacing: -1.2px;
}

.card {
  flex: none;
  margin-bottom: 48px;
  padding: 48px;
  border-radius: 12px;
  background: #27241e;
}

.card:last-child {
  flex: 1;
  min-height: 0;
  margin-bottom: 0;
  padding-bottom: 0;
  border-radius: 12px 12px 0 0;
}

h2 {
  display: flex;
  align-items: center;
  gap: 16px;
  height: 82px;
  margin: 0 0 32px;
  padding-bottom: 32px;
  border-bottom: 2px solid #6b7280;
  font-size: 32px;
  font-weight: 600;
  letter-spacing: -0.25px;
}

.icon {
  flex: none;
  fill: #ffc12f;
}

h2 .icon {
  width: 32px;
  height: 32px;
}

.contacts {
  display: flex;
  flex-direction: column;
  gap: 32px;
  margin: 0;
  padding: 0;
  list-style: none;
}

.contacts li {
  display: flex;
  align-items: center;
  gap: 24px;
  height: 52.75px;
}

.contacts .icon {
  width: 36px;
  height: 36px;
  opacity: 0.9;
}

.contacts p {
  margin: 0;
  letter-spacing: -0.67px;
}

.contacts strong {
  color: #ffc12f;
  font-weight: 700;
  letter-spacing: -0.85px;
}

.contacts .digits {
  letter-spacing: -0.4px;
}

.contacts .links {
  letter-spacing: -0.8px;
}

.map {
  position: relative;
  height: 499px;
  overflow: hidden;
  border-radius: 12px 12px 0 0;
  font-family: Roboto, "Liberation Sans", sans-serif;
}

.tiles {
  display: block;
  width: 2056px;
  height: 499px;
}

.tiles path,
.tiles circle {
  vector-effect: non-scaling-stroke;
  stroke-linejoin: round;
}

.field { fill: #cbeedd; }
.urban { fill: #eaeaea; }
.park { fill: #bce9d3; }
.grove { fill: #b0e5c6; }
.hospital { fill: #f3e0de; }
.mall { fill: #ede7da; }
.town { fill: #f5f3f4; }
.town-park { fill: #c3f1d6; }
.town-green { fill: #d2f8e3; }
.town-hospital { fill: #fde7e6; }
.town-mall { fill: #faefdf; }

.water { fill: none; stroke: #8ed6e9; }
.water .lake { fill: #8ed6e9; stroke: none; }
.w3 { stroke-width: 3.5px; }
.w4 { stroke-width: 4px; }

.trail { fill: none; stroke: #77c4a9; stroke-width: 1.2px; }
.dashed { stroke-dasharray: 7 4; }

.street { fill: none; stroke: #cad4df; stroke-width: 2px; }
.faint { stroke: #d0e3da; stroke-width: 1.2px; }
.avenue { stroke: #c3ced9; stroke-width: 8px; }

.rail { fill: none; stroke: #cccdd2; stroke-width: 2.2px; }
.rail-ties { fill: none; stroke: #cccdd2; stroke-width: 10px; stroke-dasharray: 2 30; }
.rail-ties.thin { stroke-width: 8px; stroke-dasharray: 1 31; }

.road-casing { fill: none; stroke: #b8c5d1; stroke-width: 9px; }
.road { fill: none; stroke: #cfd8e0; stroke-width: 7.4px; }
.road-casing.slim { stroke-width: 6.5px; }
.road.slim { stroke-width: 4.5px; }

.hw-casing { fill: none; stroke: #7190b3; stroke-width: 13px; }
.hw { fill: none; stroke: #8aa5c0; stroke-width: 10px; }
.hw-casing .ramp { stroke-width: 8px; }
.hw .ramp { stroke-width: 5.5px; }

.boundary { fill: none; stroke: #ee4b3f; stroke-width: 4.5px; stroke-dasharray: 3 3; }

.shield rect { fill: #ffdc4b; stroke: #e2b33c; stroke-width: 2px; }
.shield text { fill: #2b2a22; font-size: 18px; text-anchor: middle; }

.pin { fill: #fff; filter: drop-shadow(0 1px 1px rgba(0, 0, 0, 0.4)); }

.place text {
  font-size: 27px;
  paint-order: stroke;
  stroke: #f4fbf8;
  stroke-width: 5px;
  stroke-linejoin: round;
}

.blue { fill: #1073e8; }
.red { fill: #df3b47; }
.orange { fill: #d75c12; }
.green { fill: #0d8b61; }
.place .locality { fill: #33363d; font-size: 24px; font-weight: 500; }
.place .way { fill: #2f3e52; font-size: 22px; stroke-width: 4px; }

.place-card {
  position: absolute;
  top: 20px;
  left: 20px;
  display: flex;
  justify-content: space-between;
  width: 603px;
  height: 184px;
  padding: 20px 38px 0 24px;
  border-radius: 4px;
  background: #fff;
  box-shadow: 0 2px 8px rgba(0, 0, 0, 0.3);
  font-size: 24px;
  line-height: 28px;
}

.place-card a {
  color: #1274e7;
}

.place-info {
  display: flex;
  flex-direction: column;
  color: #5b5b5b;
}

.place-info strong {
  margin-bottom: 13px;
  color: #000;
  font-size: 28px;
  font-weight: 500;
  line-height: 32px;
}

.place-info a {
  margin-top: 42px;
}

.directions {
  display: flex;
  flex-direction: column;
  align-items: center;
  gap: 10px;
  padding-top: 8px;
}

.directions svg {
  width: 36px;
  height: 36px;
}
```
